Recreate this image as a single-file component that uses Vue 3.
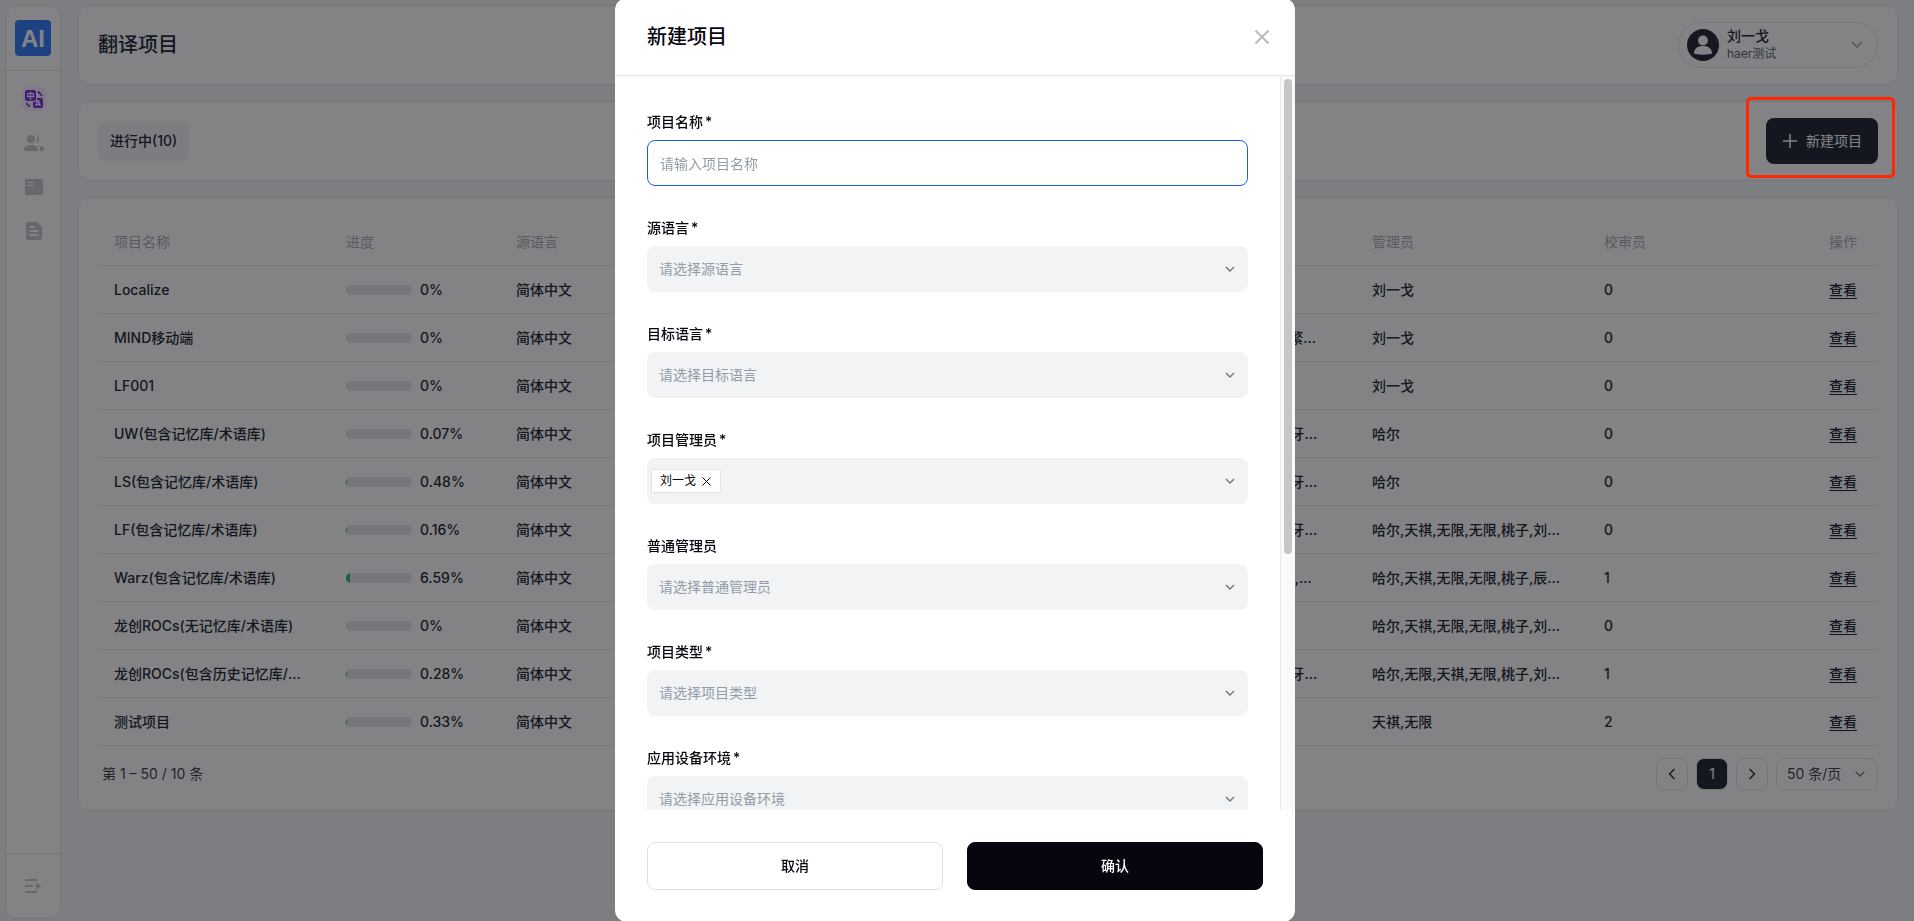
<template>
  <div class="layout">
    <aside class="sidebar">
      <div class="logo-wrap">
        <a class="logo" href="#">AI</a>
      </div>
      <nav class="menu">
        <a class="menu-item active" href="#" aria-label="翻译项目">
          <svg width="24" height="24" viewBox="0 0 24 24">
            <rect x="11" y="11" width="10" height="10" rx="2" fill="#7a2be0" />
            <text class="glyph" x="13" y="19" font-size="8">A</text>
            <rect x="2.500" y="2.500" width="12.500" height="12.500" rx="2.500" fill="#f4efff" />
            <rect x="3" y="3" width="11" height="11" rx="2" fill="#7a2be0" />
            <text class="glyph" x="4.500" y="11.500" font-size="8">中</text>
            <path d="M16 4.500l2.500 2.500M18.500 7l1.500 2M4.500 16l1 2M6 18l2 1.500" stroke="#7a2be0" stroke-width="1.800" fill="none" />
          </svg>
        </a>
        <a class="menu-item" href="#" aria-label="成员">
          <svg width="24" height="24" viewBox="0 0 24 24" fill="currentColor">
            <circle cx="9" cy="8" r="4" />
            <path d="M2 20v-1.500c0-3 3-4.500 7-4.500s7 1.500 7 4.500V20z" />
            <path d="M14 4.100a4 4 0 0 1 0 7.800c1.700-2 1.700-5.800 0-7.800zM16.500 14.200c3.300.5 5.500 2 5.500 4.300V20h-4v-1.500c0-1.800-.5-3.300-1.500-4.300z" />
          </svg>
        </a>
        <a class="menu-item" href="#" aria-label="资料库">
          <svg width="24" height="24" viewBox="0 0 24 24">
            <rect x="3" y="4" width="18" height="16" rx="1.500" fill="currentColor" />
            <path d="M5 7.500h7M5 10.500h7" stroke="#fff" stroke-width="1.200" />
          </svg>
        </a>
        <a class="menu-item" href="#" aria-label="文档">
          <svg width="24" height="24" viewBox="0 0 24 24">
            <path d="M6 3h9l5 5v11a2 2 0 0 1-2 2H6a2 2 0 0 1-2-2V5a2 2 0 0 1 2-2z" fill="currentColor" />
            <path d="M7.500 8h5M7.500 12h9M7.500 16h9" stroke="#fff" stroke-width="2" />
          </svg>
        </a>
      </nav>
      <div class="collapse">
        <button class="icon-btn" aria-label="展开">
          <svg width="18" height="16" viewBox="0 0 18 16" fill="currentColor">
            <path d="M1 1h12v2H1zM1 7h8v2H1zM1 13h12v2H1zM12 4l5 4-5 4z" />
          </svg>
        </button>
      </div>
    </aside>

    <main class="main">
      <header class="card bar">
        <h1 class="page-title">翻译项目</h1>
        <button class="user">
          <svg width="32" height="32" viewBox="0 0 32 32">
            <circle cx="16" cy="16" r="16" fill="#222735" />
            <circle cx="16" cy="11.500" r="5" fill="#fff" />
            <path d="M7 24.500c0-5 3.500-7.500 9-7.500s9 2.500 9 7.500c-3 1.500-15 1.500-18 0z" fill="#fff" />
          </svg>
          <span class="user-text">
            <span class="user-name">刘一戈</span>
            <span class="user-team">haer测试</span>
          </span>
          <svg width="12" height="8" viewBox="0 0 12 8" class="chevron">
            <path d="M1 1l5 5 5-5" />
          </svg>
        </button>
      </header>

      <section class="card bar">
        <button class="tab">进行中(10)</button>
        <div class="create">
          <button class="create-btn">
            <svg width="16" height="16" viewBox="0 0 16 16">
              <path d="M8 1v14M1 8h14" stroke="currentColor" stroke-width="1.500" />
            </svg>
            新建项目
          </button>
          <div class="create-mark"></div>
        </div>
      </section>

      <section class="card list">
        <table class="table">
          <colgroup>
            <col class="w-name" />
            <col class="w-progress" />
            <col />
            <col class="w-target" />
            <col class="w-name" />
            <col class="w-reviewer" />
            <col class="w-action" />
          </colgroup>
          <thead>
            <tr>
              <th>项目名称</th>
              <th>进度</th>
              <th>源语言</th>
              <th>目标语言</th>
              <th>管理员</th>
              <th>校审员</th>
              <th class="action">操作</th>
            </tr>
          </thead>
          <tbody>
            <tr v-for="row in rows" :key="row.name">
              <td>{{ row.name }}</td>
              <td>
                <div class="progress">
                  <div class="progress-track">
                    <div class="progress-fill" :style="{ width: `${row.progress}%` }" />
                  </div>
                  <span>{{ row.progress }}%</span>
                </div>
              </td>
              <td>简体中文</td>
              <td><div class="target">{{ row.target }}</div></td>
              <td>{{ row.managers }}</td>
              <td>{{ row.reviewers }}</td>
              <td class="action"><a href="#">查看</a></td>
            </tr>
          </tbody>
        </table>
        <footer class="pager">
          <span class="pager-total">第 1 – 50 / 10 条</span>
          <button class="page-btn" aria-label="上一页">
            <svg width="8" height="12" viewBox="0 0 8 12"><path d="M6.500 1l-5 5 5 5" /></svg>
          </button>
          <button class="page-btn current">1</button>
          <button class="page-btn" aria-label="下一页">
            <svg width="8" height="12" viewBox="0 0 8 12"><path d="M1.500 1l5 5-5 5" /></svg>
          </button>
          <div class="page-size">
            <select aria-label="每页条数">
              <option>50 条/页</option>
            </select>
            <svg width="10" height="7" viewBox="0 0 10 7" class="chevron">
              <path d="M1 1l4 4 4-4" />
            </svg>
          </div>
        </footer>
      </section>
    </main>

    <div class="overlay">
      <div class="modal" role="dialog" aria-labelledby="modal-title">
        <header class="modal-header">
          <h2 id="modal-title" class="modal-title">新建项目</h2>
          <button class="close" aria-label="关闭">
            <svg width="16" height="16" viewBox="0 0 16 16">
              <path d="M1.500 1.500l13 13M14.500 1.500l-13 13" stroke="currentColor" stroke-width="2" />
            </svg>
          </button>
        </header>
        <div class="modal-body">
          <form class="form">
            <div v-for="field in fields" :key="field.id" class="field">
              <label :for="field.id" class="label">
                <span>{{ field.label }}</span>
                <span v-if="field.required">*</span>
              </label>
              <input
                v-if="field.type === 'input'"
                :id="field.id"
                class="control text"
                :placeholder="field.placeholder"
              />
              <div v-else-if="field.type === 'tags'" class="control tags">
                <span v-for="tag in field.tags" :key="tag" class="tag">
                  {{ tag }}
                  <button type="button" :aria-label="`移除${tag}`">
                    <svg width="9" height="9" viewBox="0 0 9 9">
                      <path d="M.5.5l8 8M8.500.5l-8 8" stroke="currentColor" />
                    </svg>
                  </button>
                </span>
                <input :id="field.id" class="tag-input" role="combobox" aria-expanded="false" />
                <svg width="10" height="7" viewBox="0 0 10 7" class="chevron arrow">
                  <path d="M1 1l4 4 4-4" />
                </svg>
              </div>
              <div v-else class="select-wrap">
                <select :id="field.id" class="control">
                  <option>{{ field.placeholder }}</option>
                </select>
                <svg width="10" height="7" viewBox="0 0 10 7" class="chevron arrow">
                  <path d="M1 1l4 4 4-4" />
                </svg>
              </div>
            </div>
          </form>
          <div class="scrollbar">
            <div class="scrollbar-thumb"></div>
          </div>
        </div>
        <footer class="modal-footer">
          <button class="btn">取消</button>
          <button class="btn primary">确认</button>
        </footer>
      </div>
    </div>
  </div>
</template>

<script setup>
const team = '哈尔,天祺,无限,无限,桃子,刘一戈,辰南'
const sea = '印度尼西亚语,马来西亚语,葡萄牙语,西班牙语'

const rows = [
  { name: 'Localize', progress: 0, target: '英语', managers: '刘一戈', reviewers: 0 },
  { name: 'MIND移动端', progress: 0, target: '英语,日语,韩语,法语,俄罗斯语,繁体中文', managers: '刘一戈', reviewers: 0 },
  { name: 'LF001', progress: 0, target: '英语', managers: '刘一戈', reviewers: 0 },
  { name: 'UW(包含记忆库/术语库)', progress: 0.07, target: sea, managers: '哈尔', reviewers: 0 },
  { name: 'LS(包含记忆库/术语库)', progress: 0.48, target: sea, managers: '哈尔', reviewers: 0 },
  { name: 'LF(包含记忆库/术语库)', progress: 0.16, target: sea, managers: team, reviewers: 0 },
  { name: 'Warz(包含记忆库/术语库)', progress: 6.59, target: '俄罗斯语,日语,韩语,马来西亚语,法语,德语', managers: '哈尔,天祺,无限,无限,桃子,辰南,刘一戈', reviewers: 1 },
  { name: '龙创ROCs(无记忆库/术语库)', progress: 0, target: '英语', managers: team, reviewers: 0 },
  { name: '龙创ROCs(包含历史记忆库/术语库)', progress: 0.28, target: sea, managers: '哈尔,无限,天祺,无限,桃子,刘一戈,辰南', reviewers: 1 },
  { name: '测试项目', progress: 0.33, target: '英语', managers: '天祺,无限', reviewers: 2 }
]

const fields = [
  { id: 'name', label: '项目名称', required: true, type: 'input', placeholder: '请输入项目名称' },
  { id: 'source', label: '源语言', required: true, type: 'select', placeholder: '请选择源语言' },
  { id: 'target', label: '目标语言', required: true, type: 'select', placeholder: '请选择目标语言' },
  { id: 'owner', label: '项目管理员', required: true, type: 'tags', tags: ['刘一戈'] },
  { id: 'admin', label: '普通管理员', required: false, type: 'select', placeholder: '请选择普通管理员' },
  { id: 'type', label: '项目类型', required: true, type: 'select', placeholder: '请选择项目类型' },
  { id: 'device', label: '应用设备环境', required: true, type: 'select', placeholder: '请选择应用设备环境' }
]
</script>

<style>
body {
  background: #f3f4f6;
}
</style>

<style scoped>
.layout,
.layout * {
  box-sizing: border-box;
}

.layout {
  display: flex;
  gap: 16px;
  height: 100vh;
  padding: 5px 15px 2px 5px;
  overflow: hidden;
  font-family: Inter, "Noto Sans CJK SC", sans-serif;
  font-size: 14px;
  line-height: 20px;
  color: #222733;
}

button,
input,
select {
  margin: 0;
  padding: 0;
  border: 0;
  background: none;
  font: inherit;
  color: inherit;
  outline: none;
}

select {
  appearance: none;
}

svg {
  display: block;
  flex: none;
}

.chevron,
.page-btn svg {
  fill: none;
  stroke: currentColor;
  stroke-width: 1.4;
}

/* Sidebar */
.sidebar {
  display: flex;
  flex-direction: column;
  flex: none;
  width: 56px;
  background: #fff;
  border: 1px solid #e2e4ea;
  border-radius: 12px;
}

.logo-wrap {
  display: flex;
  justify-content: center;
  align-items: center;
  height: 65px;
  border-bottom: 1px solid #e2e4ea;
}

.logo {
  width: 36px;
  height: 36px;
  border-radius: 4px;
  background: #317df5;
  color: #fff;
  font-family: "Liberation Sans", sans-serif;
  font-size: 24px;
  font-weight: 700;
  line-height: 38px;
  text-align: center;
  text-decoration: none;
}

.menu {
  display: flex;
  flex-direction: column;
  align-items: center;
  gap: 20px;
  flex: 1;
  padding: 16px 0 0 2px;
}

.menu-item {
  border-radius: 6px;
  color: #c6c8cc;
}

.menu-item.active {
  background: #f4efff;
}

.glyph {
  fill: #fff;
  font-weight: 700;
}

.collapse {
  display: flex;
  justify-content: center;
  align-items: center;
  height: 65px;
  border-top: 1px solid #e2e4ea;
  color: #c6c8cc;
}

/* Content cards */
.main {
  display: flex;
  flex-direction: column;
  gap: 16px;
  flex: 1;
  min-width: 0;
}

.card {
  background: #fff;
  border: 1px solid #e2e4ea;
  border-radius: 12px;
}

.bar {
  display: flex;
  align-items: center;
  justify-content: space-between;
  height: 80px;
  padding: 0 20px;
}

.page-title {
  margin: 0;
  font-size: 20px;
  font-weight: 500;
  line-height: 28px;
}

.user {
  display: flex;
  align-items: center;
  gap: 8px;
  width: 200px;
  height: 46px;
  padding: 0 14px 0 8px;
  border: 1px solid #e2e4ea;
  border-radius: 23px;
  color: #9da1ab;
}

.user-text {
  display: flex;
  flex-direction: column;
  flex: 1;
  text-align: left;
}

.user-name {
  font-weight: 500;
  line-height: 18px;
  color: #222733;
}

.user-team {
  font-size: 12px;
  line-height: 18px;
  color: #5a5f6c;
}

.tab {
  height: 40px;
  padding: 0 12px;
  border-radius: 8px;
  background: #f1f2f5;
  font-weight: 500;
}

.create {
  position: relative;
}

.create-btn {
  display: flex;
  align-items: center;
  gap: 8px;
  height: 46px;
  padding: 0 16px;
  border-radius: 8px;
  background: #222733;
  color: #fff;
}

/* Highlight frame, stays above the dialog mask */
.create-mark {
  position: absolute;
  inset: -21px -17px -14px -20px;
  z-index: 20;
  border: 3px solid #ff2600;
  border-radius: 5px;
}

.list {
  padding: 20px;
}

.table {
  width: 100%;
  table-layout: fixed;
  border-collapse: separate;
  border-spacing: 0;
}

.w-name {
  width: 232px;
}

.w-progress {
  width: 170px;
}

.w-target {
  width: 272px;
}

.w-reviewer {
  width: 220px;
}

.w-action {
  width: 70px;
}

th,
td {
  height: 48px;
  padding: 0 16px;
  border-bottom: 1px solid #e2e4ea;
  text-align: left;
  white-space: nowrap;
  overflow: hidden;
  text-overflow: ellipsis;
}

th {
  font-weight: 400;
  color: #a8abb4;
}

td {
  font-weight: 500;
}

th.action,
td.action {
  padding: 0;
  text-align: center;
}

.action a {
  color: inherit;
  text-underline-offset: 3px;
}

.progress {
  display: flex;
  align-items: center;
  gap: 8px;
}

.progress-track {
  width: 66px;
  height: 10px;
  border-radius: 5px;
  background: #e2e4ec;
  overflow: hidden;
}

.progress-fill {
  height: 100%;
  background: #2fb780;
}

.target {
  max-width: 222px;
  overflow: hidden;
  text-overflow: ellipsis;
}

.pager {
  display: flex;
  align-items: center;
  gap: 8px;
  padding: 12px 0 0 4px;
}

.pager-total {
  flex: 1;
  color: #3c414d;
}

.page-btn {
  display: flex;
  justify-content: center;
  align-items: center;
  width: 32px;
  height: 32px;
  border: 1px solid #e2e4ea;
  border-radius: 8px;
}

.page-btn.current {
  background: #222733;
  color: #fff;
}

.page-size {
  position: relative;
  color: #777c89;
}

.page-size select {
  width: 102px;
  height: 32px;
  padding: 0 10px;
  border: 1px solid #e2e4ea;
  border-radius: 8px;
  color: #3c414d;
}

.page-size svg {
  position: absolute;
  top: 13px;
  right: 13px;
}

/* Dialog */
.overlay {
  position: fixed;
  inset: 0;
  z-index: 10;
  display: flex;
  justify-content: center;
  align-items: flex-start;
  background: rgba(7, 7, 14, 0.5);
}

.modal {
  display: flex;
  flex-direction: column;
  width: 680px;
  height: calc(100vh + 3px);
  margin: -2px 4px 0 0;
  border-radius: 12px;
  background: #fff;
  color: #07050e;
}

.modal-header {
  display: flex;
  align-items: center;
  justify-content: space-between;
  height: 78px;
  padding: 0 25px 0 32px;
  border-bottom: 1px solid #e5e5e8;
}

.modal-title {
  margin: 0;
  font-size: 20px;
  font-weight: 500;
  line-height: 30px;
}

.close {
  color: #bbb;
}

.modal-body {
  display: flex;
  flex: 1;
  min-height: 0;
}

.form {
  display: flex;
  flex-direction: column;
  gap: 32px;
  flex: 1;
  padding: 36px 32px;
  overflow-y: auto;
  scrollbar-width: none;
}

.field {
  display: flex;
  flex-direction: column;
  gap: 8px;
}

.label {
  display: flex;
  gap: 2px;
  font-weight: 500;
}

.control {
  display: block;
  width: 100%;
  height: 46px;
  padding: 0 12px;
  border-radius: 8px;
  background: #f1f3f5;
  color: #929ca8;
}

.text {
  border: 1px solid #1b5ef5;
  background: #fff;
}

.text::placeholder {
  color: #929ca8;
  opacity: 1;
}

.tags {
  position: relative;
  display: flex;
  align-items: center;
  padding: 0 4px;
}

.tag {
  display: flex;
  align-items: center;
  gap: 6px;
  height: 24px;
  padding: 0 9px 0 8px;
  border: 1px solid #e2e4ea;
  border-radius: 2px;
  background: #fff;
  color: #07050e;
  font-size: 12px;
}

.tag-input {
  flex: 1;
  min-width: 0;
}

.select-wrap {
  position: relative;
}

.arrow {
  position: absolute;
  top: 20px;
  right: 13px;
  color: #6b7683;
}

.scrollbar {
  width: 15px;
  padding: 3px;
  border-left: 1px solid #e8e8e8;
  background: #fafafa;
}

.scrollbar-thumb {
  width: 8px;
  height: 65.3%;
  border-radius: 4px;
  background: #c6c6c6;
}

.modal-footer {
  display: flex;
  gap: 24px;
  padding: 32px;
}

.btn {
  flex: 1;
  height: 48px;
  border: 1px solid #dfdfe8;
  border-radius: 8px;
  font-weight: 500;
}

.btn.primary {
  border-color: #07050e;
  background: #07050e;
  color: #fff;
}
</style>
